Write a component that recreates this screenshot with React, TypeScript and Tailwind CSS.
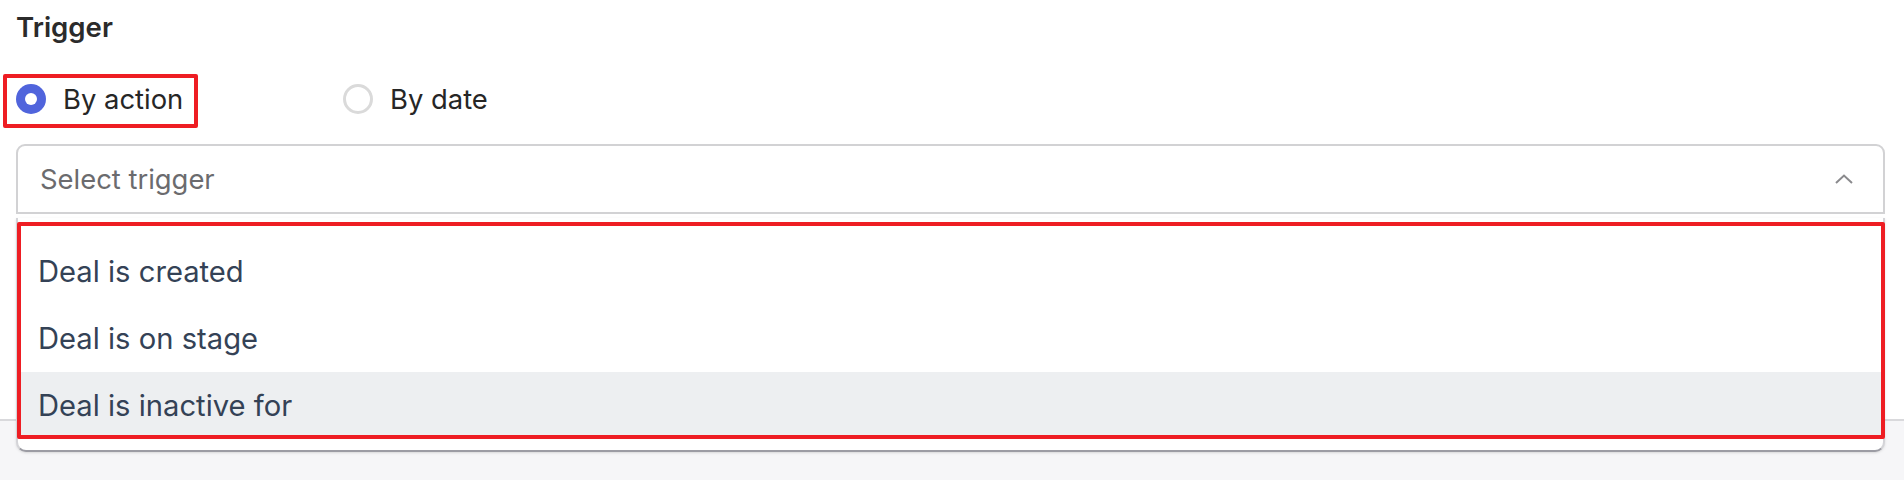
import React from 'react';

// Trigger picker: radio choice + open select with options
const options = ['Deal is created', 'Deal is on stage', 'Deal is inactive for'];

function Radio({ checked }: { checked: boolean }) {
    if (checked) {
        return (
            <span className="flex h-[30px] w-[30px] items-center justify-center rounded-full bg-[#5064dc]">
                <span className="h-[12px] w-[12px] rounded-full bg-white" />
            </span>
        );
    }
    return <span className="h-[30px] w-[30px] rounded-full border-[3px] border-[#dadada] bg-white" />;
}

export default function App() {
    const active = 2;

    return (
        <div className="relative flex h-[480px] w-[1904px] flex-col overflow-hidden bg-white font-['Inter',sans-serif]">
            <div className="h-[419px] pl-4 pr-[19px] pt-[10px]">
                <h3 className="text-[27.6px] leading-[34px] font-semibold text-[#2b2b2b]">Trigger</h3>

                <div className="mt-[38px] flex h-[34px] items-center">
                    <label className="flex w-[327px] items-center gap-[17px]">
                        <Radio checked={true} />
                        <span className="text-[27.4px] leading-[34px] text-[#262626]">By action</span>
                    </label>
                    <label className="flex items-center gap-[17px]">
                        <Radio checked={false} />
                        <span className="text-[27.4px] leading-[34px] text-[#262626]">By date</span>
                    </label>
                </div>

                <div className="mt-[28px] flex h-[70px] items-center justify-between rounded-t-[9px] border-2 border-[#d2d2d4] bg-white pl-[22px] pr-[30px]">
                    <span className="text-[27.4px] leading-[34px] text-[#6b6b6e]">Select trigger</span>
                    <svg width="18" height="10" viewBox="0 0 18 10" fill="none">
                        <polyline points="1,9 9,1.5 17,9" stroke="#8a8a8d" strokeWidth="2" />
                    </svg>
                </div>
            </div>

            <div className="flex-1 border-t-2 border-[#d9d9dc] bg-[#f6f6f8]" />

            {/* dropdown menu (open) */}
            <div className="absolute left-4 top-[218px] h-[234px] w-[1869px] rounded-b-[10px] border-2 border-t-0 border-[#d4d4d8] border-b-[#9c9ca4] bg-white pt-[20px] shadow-sm">
                {options.map((opt, i) => (
                    <div
                        key={opt}
                        className={`flex h-[67px] items-center pl-[20px] text-[29.2px] leading-[34px] text-[#344256] ${i === active ? 'bg-[#edeff1]' : ''}`}
                    >
                        {opt}
                    </div>
                ))}
            </div>

            {/* annotation boxes */}
            <div className="pointer-events-none absolute left-[3px] top-[74px] h-[54px] w-[195px] rounded-[2px] border-4 border-[#ee1d23]" />
            <div className="pointer-events-none absolute left-[17px] top-[222px] h-[217px] w-[1868px] rounded-[2px] border-4 border-[#ee1d23]" />
        </div>
    );
}
